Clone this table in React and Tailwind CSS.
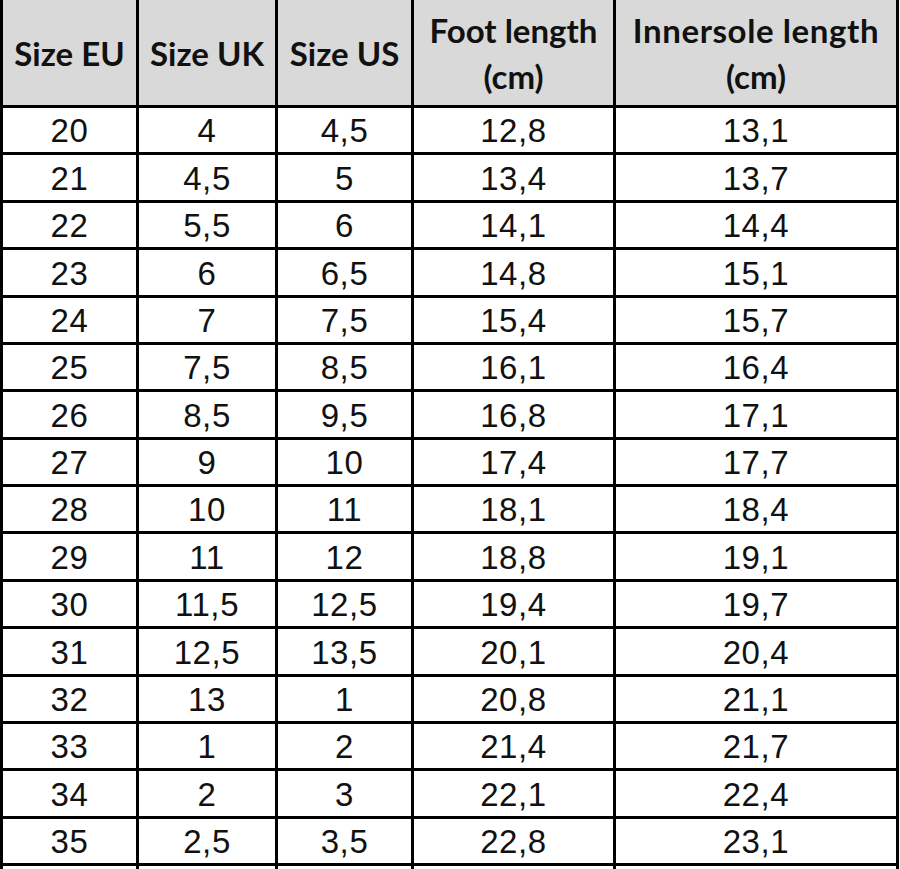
const ROWS = [
  ['20', '4', '4,5', '12,8', '13,1'],
  ['21', '4,5', '5', '13,4', '13,7'],
  ['22', '5,5', '6', '14,1', '14,4'],
  ['23', '6', '6,5', '14,8', '15,1'],
  ['24', '7', '7,5', '15,4', '15,7'],
  ['25', '7,5', '8,5', '16,1', '16,4'],
  ['26', '8,5', '9,5', '16,8', '17,1'],
  ['27', '9', '10', '17,4', '17,7'],
  ['28', '10', '11', '18,1', '18,4'],
  ['29', '11', '12', '18,8', '19,1'],
  ['30', '11,5', '12,5', '19,4', '19,7'],
  ['31', '12,5', '13,5', '20,1', '20,4'],
  ['32', '13', '1', '20,8', '21,1'],
  ['33', '1', '2', '21,4', '21,7'],
  ['34', '2', '3', '22,1', '22,4'],
  ['35', '2,5', '3,5', '22,8', '23,1'],
  ['', '', '', '', ''],
];

const HEADERS = [
  ['Size EU'],
  ['Size UK'],
  ['Size US'],
  ['Foot length', '(cm)'],
  ['Innersole length', '(cm)'],
];

export default function App() {
  return (
    <div className="w-[900px] h-[869px] overflow-hidden bg-white">
      <div className="grid grid-cols-[133px_136px_133px_199px_280px] gap-[3px] bg-black px-[3px] w-[899px] grid-rows-[105px_repeat(17,44.375px)]">
        {HEADERS.map((lines, i) => (
          <div
            key={i}
            className="bg-[#d9d9d9] flex flex-col items-center justify-center text-[#111] font-bold text-[33px] leading-[46px] font-['Lato','Noto_Sans',sans-serif]"
          >
            {lines.map(l => (
              <span key={l} className={l.length > 12 ? 'tracking-[0.6px]' : ''}>{l}</span>
            ))}
          </div>
        ))}
        {ROWS.map((row, r) =>
          row.map((cell, c) => (
            <div
              key={r + '-' + c}
              className="bg-white flex items-center justify-center text-[#111] text-[33px] tracking-[0.6px] font-['Liberation_Sans',Arial,sans-serif] pt-[2px]"
            >
              {cell}
            </div>
          ))
        )}
      </div>
    </div>
  );
}
